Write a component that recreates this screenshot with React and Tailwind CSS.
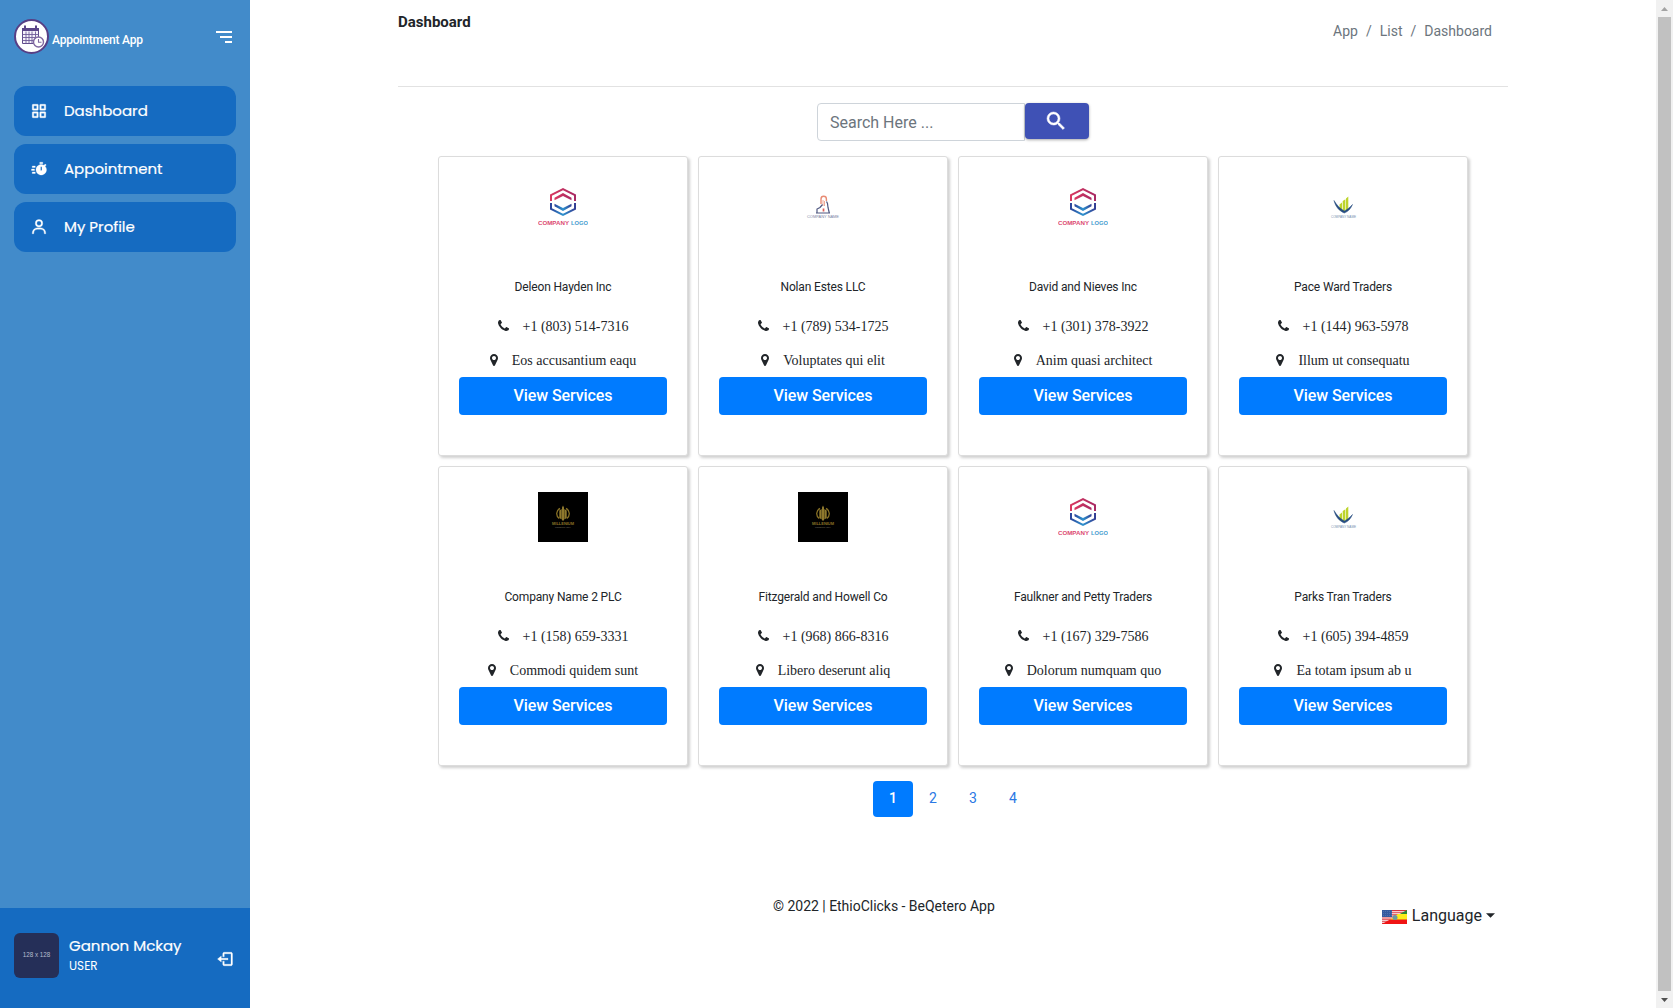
import { BiGridAlt, BiSolidTimer, BiUser, BiMenuAltRight, BiLogOut } from "react-icons/bi";

const menu = [
  { label: "Dashboard", Icon: BiGridAlt },
  { label: "Appointment", Icon: BiSolidTimer },
  { label: "My Profile", Icon: BiUser },
];

const companies = [
  { logo: "hexagon", name: "Deleon Hayden Inc", phone: "+1 (803) 514-7316", place: "Eos accusantium eaqu" },
  { logo: "tower", name: "Nolan Estes LLC", phone: "+1 (789) 534-1725", place: "Voluptates qui elit" },
  { logo: "hexagon", name: "David and Nieves Inc", phone: "+1 (301) 378-3922", place: "Anim quasi architect" },
  { logo: "bars", name: "Pace Ward Traders", phone: "+1 (144) 963-5978", place: "Illum ut consequatu" },
  { logo: "gold", name: "Company Name 2 PLC", phone: "+1 (158) 659-3331", place: "Commodi quidem sunt" },
  { logo: "gold", name: "Fitzgerald and Howell Co", phone: "+1 (968) 866-8316", place: "Libero deserunt aliq" },
  { logo: "hexagon", name: "Faulkner and Petty Traders", phone: "+1 (167) 329-7586", place: "Dolorum numquam quo" },
  { logo: "bars", name: "Parks Tran Traders", phone: "+1 (605) 394-4859", place: "Ea totam ipsum ab u" },
];

function HexagonLogo() {
  return (
    <svg viewBox="0 0 50 50" className="size-[50px]" fill="none" fontFamily="Liberation Sans, sans-serif">
      <defs>
        <linearGradient id="hexTop" x1="0" x2="1"><stop stopColor="#d8375f" /><stop offset="1" stopColor="#a92a63" /></linearGradient>
        <linearGradient id="hexBottom" x1="0" x2="1"><stop stopColor="#2c459b" /><stop offset=".5" stopColor="#2e93cf" /><stop offset="1" stopColor="#343f94" /></linearGradient>
      </defs>
      <path d="M13 19V13L25 7l12 6v6" stroke="url(#hexTop)" strokeWidth="2" />
      <path d="M16.500 18.300v-2.600L25 11l8.500 4.700v2.600L25 14Z" fill="url(#hexTop)" />
      <path d="M13 21v6l12 6L37 27v-6" stroke="url(#hexBottom)" strokeWidth="2" />
      <path d="M16.500 21.700v2.600L25 29l8.500-4.700v-2.600L25 26Z" fill="url(#hexBottom)" />
      <text x="0" y="42.500" fontSize="5.600" fontWeight="700" fill="#dc4a72" textLength="31" lengthAdjust="spacingAndGlyphs">COMPANY</text>
      <text x="33" y="42.500" fontSize="5.600" fontWeight="700" fill="#459dcf" textLength="17" lengthAdjust="spacingAndGlyphs">LOGO</text>
    </svg>
  );
}

function TowerLogo() {
  return (
    <svg viewBox="0 0 50 50" className="size-[50px]" fill="none" fontFamily="Liberation Sans, sans-serif">
      <path d="M23 22v-5a2.700 2.700 0 0 1 5.400 0v2" stroke="#e88b74" strokeWidth="1.400" />
      <path d="M25 24v-6M26.500 24v-5" stroke="#eda18f" strokeWidth=".9" />
      <path d="M18 31h14M19 31v-4l3-1.500 2.500-3M28.500 19.500l1 2 .5 4 1.300 5.500" stroke="#4f5780" strokeWidth="1.200" />
      <path d="M25.500 26.500v3" stroke="#dc5e58" strokeWidth="1.700" />
      <text x="9" y="36.200" fontSize="3.800" fill="#7b84a5" textLength="32" lengthAdjust="spacingAndGlyphs">COMPANY NAME</text>
    </svg>
  );
}

function BarsLogo() {
  return (
    <svg viewBox="0 0 50 50" className="size-[50px]" fill="none" fontFamily="Liberation Sans, sans-serif">
      <path d="M21.500 22.500 24 20.500v9L21.500 28ZM24.700 19l2.700-1.800V30L24.700 30ZM28 16.500l2.300-2V27.500L28 29Z" fill="#bdd42e" />
      <path d="M16 18.500c1.600 6.500 5.400 10.500 10.300 12.500 4.200-1.500 6.500-4.500 8.200-8.500-2.600 3-5.200 5-8.200 6.400-4-2-7.500-5.600-10.300-10.400Z" fill="#274d80" stroke="#274d80" strokeWidth=".5" />
      <text x="13" y="36.200" fontSize="3.700" fill="#7590ae" textLength="25" lengthAdjust="spacingAndGlyphs">COMPANY NAME</text>
    </svg>
  );
}

function GoldLogo() {
  return (
    <svg viewBox="0 0 50 50" className="size-[50px] bg-black" fill="none" fontFamily="Liberation Sans, sans-serif">
      <path d="M22 16.300a6 6 0 0 0-.8 10.200M28 16.300a6 6 0 0 1 .8 10.200" stroke="#887125" strokeWidth="1.300" />
      <path d="M21.300 18.500 23.700 17v10.500l-2.400-1.500ZM24 15.500l1-2 1 2v13h-2ZM26.300 17l2.400 1.500V26l-2.400 1.500Z" fill="#8f792d" />
      <text x="14" y="33" fontSize="3.600" fontWeight="700" fill="#8a7126" textLength="22" lengthAdjust="spacingAndGlyphs">MILLENIUM</text>
      <text x="17" y="35.500" fontSize="2.200" fill="#77715f" textLength="16" lengthAdjust="spacingAndGlyphs">CONSULTANCY</text>
    </svg>
  );
}

const logos = { hexagon: HexagonLogo, tower: TowerLogo, bars: BarsLogo, gold: GoldLogo };

function PhoneIcon() {
  return (
    <svg viewBox="192 128 1408 1536" className="h-3 w-[11px]" fill="currentColor">
      <path d="M1600 1240q0 27-10 70.500t-21 68.500q-21 50-122 106-94 51-186 51-27 0-53-3.500t-57.500-12.500-47-14.500-55.500-20.500-49-18q-98-35-175-83-127-79-264-216t-216-264q-48-77-83-175-3-9-18-49t-20.500-55.500-14.500-47-12.500-57.500-3.500-53q0-92 51-186 56-101 106-122 25-11 68.500-21t70.500-10q14 0 21 3 18 6 53 76 11 19 30 54t35 63.500 31 53.500q3 4 17.500 25t21.500 35.500 7 28.500q0 20-28.500 50t-62 55-62 53-28.500 46q0 9 5 22.500t8.500 20.500 14 24 11.500 19q76 137 174 235t235 174q2 1 19 11.500t24 14 20.500 8.500 22.500 5q18 0 46-28.500t53-62 55-62 50-28.500q14 0 28.500 7t35.500 21.500 25 17.500q25 15 53.500 31t63.500 35 54 30q70 35 76 53 3 7 3 21z" />
    </svg>
  );
}

function MarkerIcon() {
  return (
    <svg viewBox="384 128 1024 1536" className="h-3 w-2" fill="currentColor">
      <path d="M1152 640q0-106-75-181t-181-75-181 75-75 181 75 181 181 75 181-75 75-181zm256 0q0 109-33 179l-364 774q-16 33-47.500 52t-67.500 19-67.500-19-46.500-52l-365-774q-33-70-33-179 0-212 150-362t362-150 362 150 150 362z" />
    </svg>
  );
}

function SearchIcon() {
  return (
    <svg viewBox="0 0 24 24" className="mr-0.5 size-6" fill="currentColor" stroke="currentColor" strokeWidth=".5">
      <path d="M15.500 14h-.79l-.28-.27A6.471 6.471 0 0 0 16 9.500 6.500 6.500 0 1 0 9.500 16c1.610 0 3.090-.59 4.230-1.570l.27.28v.79l5 4.990L20.490 19l-4.990-5zm-6 0C7.010 14 5 11.990 5 9.500S7.010 5 9.500 5 14 7.010 14 9.500 11.990 14 9.500 14z" />
    </svg>
  );
}

function AppLogo() {
  return (
    <svg viewBox="0 0 36 36" className="size-9" fill="none">
      <circle cx="17.500" cy="17.500" r="16.500" fill="#fff" stroke="#573f85" strokeWidth="2" />
      <path d="M8.500 9.500h16v15h-16Z" fill="#f5f2fa" stroke="#604b8c" />
      <path d="M8 9h17v3H8Z" fill="#5b4588" />
      <path d="M11 6.500v4M22 6.500v4" stroke="#5b4588" strokeWidth="2" />
      <path d="M8.500 15.500h16M8.500 18.500h16M8.500 21.500h16M12 12.500v12M15 12.500v12M18 12.500v12M21.500 12.500v12" stroke="#6f5c98" strokeWidth=".9" />
      <circle cx="24.500" cy="23" r="5" fill="#fff" stroke="#7f68a0" strokeWidth="1.400" />
      <path d="M24.500 20v3.300h3" stroke="#7f68a0" strokeWidth="1.100" />
    </svg>
  );
}

function FlagIcon() {
  return (
    <svg viewBox="0 0 25 14" className="mt-px h-3.5 w-[25px]">
      <path fill="#fff" d="M0 0h25v14H0z" />
      <path stroke="#d8343c" strokeWidth="1.100" d="M0 .6h25M0 2.700h25M0 4.900h25M0 7h25M0 9.100h25M0 11.300h25M0 13.400h25" />
      <path fill="#355a9f" d="M0 0h10v7H0z" />
      <path stroke="#7f99c8" strokeWidth=".6" strokeDasharray=".6 1.400" d="M1 1.500h9M1 3.500h9M1 5.500h9" />
      <path fill="#2f8a36" d="M25 0v5H16z" />
      <path fill="#fcee1b" d="M25 4v6H7.500l8.500-6z" />
      <path fill="#f01414" d="M25 9.500V14H0l8-4.500z" />
      <circle cx="13" cy="7.500" r="2.500" fill="#6c98a0" />
    </svg>
  );
}

function CompanyCard({ company }) {
  const Logo = logos[company.logo];
  return (
    <article className="flex h-[300px] flex-col items-center rounded-[3px] border border-[#dcdcdc] bg-white px-5 pt-[25px] shadow-[2px_2px_3px_#d0d0d0]">
      <Logo />
      <h2 className="mt-[46px] text-xs leading-[18px] tracking-[-0.15px] text-[#212529]">{company.name}</h2>
      <div className="mt-[19px] flex h-[21px] items-center gap-3.5 font-['Liberation_Serif',serif] text-sm text-[#212529]">
        <PhoneIcon />
        <span className="pt-0.5">{company.phone}</span>
      </div>
      <div className="mt-[13px] flex h-[21px] items-center gap-3.5 font-['Liberation_Serif',serif] text-sm text-[#212529]">
        <MarkerIcon />
        <span className="pt-0.5">{company.place}</span>
      </div>
      <button className="mt-[7px] h-[38px] w-full rounded bg-[#007bff] text-base font-medium tracking-[-0.08px] text-white">View Services</button>
    </article>
  );
}

function Sidebar() {
  return (
    <aside className="flex w-[250px] shrink-0 flex-col bg-[#428bca] text-white">
      <header className="flex h-[74px] items-center px-3.5">
        <AppLogo />
        <span className="ml-0.5 mt-1.5 text-xs font-medium tracking-[-0.2px]">Appointment App</span>
        <BiMenuAltRight className="ml-auto size-6" />
      </header>
      <nav className="mt-3 flex flex-col gap-2 px-3.5 font-[Poppins,Inter,sans-serif]">
        {menu.map(({ label, Icon }) => (
          <a key={label} className="flex h-[50px] items-center rounded-xl bg-[#156bc1]">
            <span className="flex w-[50px] justify-center"><Icon className="size-[18px] stroke-current stroke-[0.4px]" /></span>
            <span className="text-[15px] [-webkit-text-stroke:0.2px_white]">{label}</span>
          </a>
        ))}
      </nav>
      <footer className="mt-auto flex h-[100px] items-center bg-[#156bc1] px-3.5 pb-1.5">
        <div className="flex size-[45px] items-center justify-center rounded-md bg-[#252f58] font-['Liberation_Sans',sans-serif] text-[6.300px] text-[#b6bbcd]">128 x 128</div>
        <div className="ml-2.5 font-[Poppins,Inter,sans-serif]">
          <p className="text-[15px] leading-[22px] [-webkit-text-stroke:0.2px_white]">Gannon Mckay</p>
          <p className="text-xs leading-[18px]">USER</p>
        </div>
        <BiLogOut className="mt-2 mr-0.5 ml-auto size-[18px] stroke-current stroke-[0.4px]" />
      </footer>
    </aside>
  );
}

function Scrollbar() {
  return (
    <div className="flex w-[17px] shrink-0 flex-col items-center bg-[#f1f1f1]">
      <div className="flex h-[17px] items-center"><svg viewBox="0 0 7 4" className="h-1 w-[7px]"><path d="M0 4 3.500 0 7 4z" fill="#a3a3a3" /></svg></div>
      <div className="w-[13px] flex-1 bg-[#c1c1c1]" />
      <div className="flex h-[17px] items-center"><svg viewBox="0 0 7 4" className="h-1 w-[7px]"><path d="M0 0 3.500 4 7 0z" fill="#505050" /></svg></div>
    </div>
  );
}

export default function App() {
  return (
    <div className="flex h-screen overflow-hidden bg-white font-[Roboto,sans-serif] text-[#212529]">
      <Sidebar />
      <main className="flex flex-1 flex-col items-center">
        <div className="flex w-[1110px] flex-col">
          <header className="flex h-[87px] justify-between border-b border-[#e2e2e2]">
            <h1 className="mt-3 text-[15px] leading-5 font-bold">Dashboard</h1>
            <nav className="mt-5 mr-4 flex gap-2 text-sm leading-[22px] text-[#6c757d]">
              <span>App</span><span>/</span><span>List</span><span>/</span><span>Dashboard</span>
            </nav>
          </header>
          <form className="mt-4 flex justify-center">
            <input placeholder="Search Here ..." className="h-[38px] w-[208px] rounded-l border border-[#ced4da] px-3 text-base placeholder:text-[#6c757d]" />
            <button type="button" className="flex h-9 w-16 items-center justify-center rounded bg-[#3f51b5] text-white shadow-[0_1px_3px_rgba(0,0,0,0.35)]">
              <SearchIcon />
            </button>
          </form>
          <section className="mx-10 mt-[15px] grid grid-cols-4 gap-2.5">
            {companies.map((company) => <CompanyCard key={company.name} company={company} />)}
          </section>
          <nav className="mt-[15px] flex justify-center text-sm text-[#2a78e4]">
            <span className="flex h-9 w-10 items-center justify-center rounded bg-[#007bff] pb-0.5 font-medium text-white">1</span>
            <span className="flex h-9 w-10 items-center justify-center pb-0.5">2</span>
            <span className="flex h-9 w-10 items-center justify-center pb-0.5">3</span>
            <span className="flex h-9 w-10 items-center justify-center pb-0.5">4</span>
          </nav>
          <footer className="mt-[78px] flex items-start pl-[375px]">
            <p className="text-sm leading-[22px] tracking-[-0.02px]">© 2022 | EthioClicks - BeQetero App</p>
            <div className="mt-[9px] mr-[13px] ml-auto flex items-center text-base leading-6">
              <FlagIcon />
              <span className="ml-[5px]">Language</span>
              <svg viewBox="0 0 10 5" className="mb-0.5 ml-1 h-[5px] w-[9px]"><path d="M0 0h10L5 5z" fill="#212529" /></svg>
            </div>
          </footer>
        </div>
      </main>
      <Scrollbar />
    </div>
  );
}
